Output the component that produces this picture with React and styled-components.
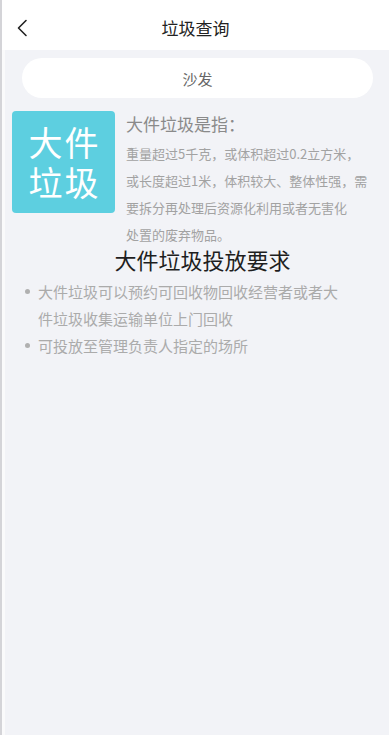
import styled, { createGlobalStyle } from "styled-components";

const GlobalStyle = createGlobalStyle`
  html, body {
    margin: 0;
    padding: 0;
    background: #f2f3f7;
  }
  body {
    font-family: "Noto Sans CJK SC", "Noto Sans", sans-serif;
  }
`;

const Page = styled.div`
  min-height: 735px;
  background: #f2f3f7;
  border-left: 2px solid #d4d4d8;
  box-shadow: inset 3px 0 0 #fafafb;
  box-sizing: border-box;
`;

const Header = styled.div`
  height: 50px;
  background: #fff;
  display: grid;
  grid-template-columns: 40px 1fr 40px;
  align-items: center;
  padding-top: 6px;
  box-sizing: border-box;
`;

const Back = styled.div`
  display: flex;
  align-items: center;
  padding-left: 14px;
`;

const Title = styled.div`
  text-align: center;
  font-size: 17px;
  color: #222;
  line-height: 20px;
`;

const Search = styled.div`
  margin: 8px 16px 0 20px;
  height: 40px;
  border-radius: 20px;
  background: #fff;
  display: flex;
  align-items: center;
  justify-content: center;
  font-size: 15px;
  color: #666;
`;

const Intro = styled.div`
  display: flex;
  gap: 11px;
  padding: 13px 0 0 10px;
`;

const Badge = styled.div`
  flex: none;
  width: 103px;
  height: 102px;
  background: #5dcfe0;
  border-radius: 4px;
  display: flex;
  align-items: center;
  justify-content: center;
  text-align: center;
  color: #fff;
  font-size: 34px;
  line-height: 40px;
  letter-spacing: 2px;
  padding-left: 2px;
  box-sizing: border-box;
`;

const Desc = styled.div`
  display: flex;
  flex-direction: column;
  padding-top: 2px;
`;

const DescTitle = styled.div`
  font-size: 17px;
  line-height: 22px;
  color: #8a8a8a;
  margin-bottom: 5px;
`;

const DescBody = styled.div`
  font-size: 13px;
  line-height: 27px;
  color: #a2a2a2;
  white-space: nowrap;
`;

const Heading = styled.div`
  text-align: center;
  font-size: 22px;
  line-height: 28px;
  color: #1e1e1e;
  padding-left: 14px;
  margin-top: -3px;
`;

const List = styled.ul`
  list-style: none;
  margin: 5px 0 0;
  padding: 0 0 0 23px;
`;

const Item = styled.li`
  display: flex;
  gap: 8px;
  font-size: 15px;
  line-height: 27px;
  color: #ababab;
  white-space: nowrap;

  &::before {
    content: "";
    flex: none;
    width: 5px;
    height: 5px;
    border-radius: 50%;
    background: #b0b0b0;
    margin-top: 11px;
  }
`;

export default function App() {
  return (
    <Page>
      <GlobalStyle />
      <Header>
        <Back>
          <svg width="12" height="18" viewBox="0 0 12 18" fill="none">
            <path d="M10 1.5 2.5 9 10 16.5" stroke="#222" strokeWidth="1.6" strokeLinecap="round" strokeLinejoin="round" />
          </svg>
        </Back>
        <Title>垃圾查询</Title>
        <span />
      </Header>
      <Search>沙发</Search>
      <Intro>
        <Badge>
          大件<br />垃圾
        </Badge>
        <Desc>
          <DescTitle>大件垃圾是指：</DescTitle>
          <DescBody>
            重量超过5千克，或体积超过0.2立方米，<br />
            或长度超过1米，体积较大、整体性强，需<br />
            要拆分再处理后资源化利用或者无害化<br />
            处置的废弃物品。
          </DescBody>
        </Desc>
      </Intro>
      <Heading>大件垃圾投放要求</Heading>
      <List>
        <Item>
          <span>
            大件垃圾可以预约可回收物回收经营者或者大<br />
            件垃圾收集运输单位上门回收
          </span>
        </Item>
        <Item>
          <span>可投放至管理负责人指定的场所</span>
        </Item>
      </List>
    </Page>
  );
}
